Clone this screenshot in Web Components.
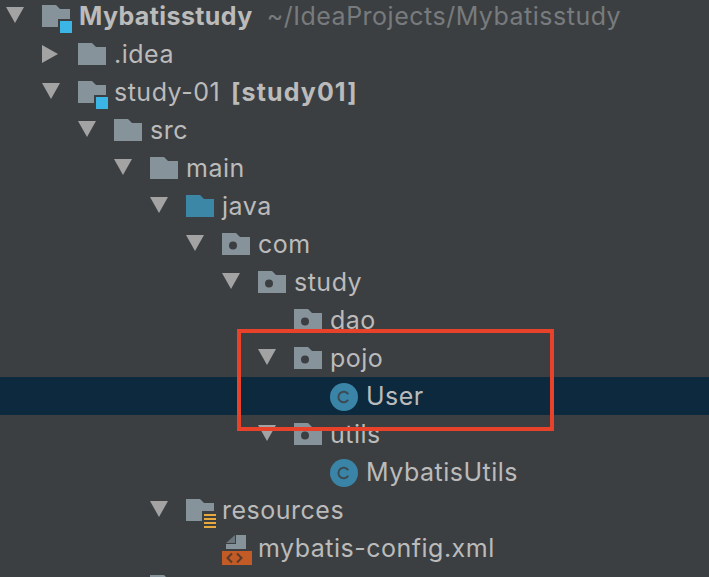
<!doctype html>
<html><head><meta charset="utf-8">
<style>
html,body{margin:0;padding:0;background:#3c3f41}
body{width:709px;height:577px;overflow:hidden;position:relative}
</style></head><body>
<project-tree>
<tree-row depth="0" arrow="down" icon="module"><tree-strong>Mybatisstudy</tree-strong><tree-hint>~/IdeaProjects/Mybatisstudy</tree-hint></tree-row>
<tree-row depth="1" arrow="right" icon="folder">.idea</tree-row>
<tree-row depth="1" arrow="down" icon="module">study-01<tree-tag>[study01]</tree-tag></tree-row>
<tree-row depth="2" arrow="down" icon="folder">src</tree-row>
<tree-row depth="3" arrow="down" icon="folder">main</tree-row>
<tree-row depth="4" arrow="down" icon="source">java</tree-row>
<tree-row depth="5" arrow="down" icon="package">com</tree-row>
<tree-row depth="6" arrow="down" icon="package">study</tree-row>
<tree-row depth="7" icon="package">dao</tree-row>
<tree-row depth="7" arrow="down" icon="package">pojo</tree-row>
<tree-row depth="8" icon="class" selected>User</tree-row>
<tree-row depth="7" arrow="down" icon="package">utils</tree-row>
<tree-row depth="8" icon="class">MybatisUtils</tree-row>
<tree-row depth="4" arrow="down" icon="resources">resources</tree-row>
<tree-row depth="5" icon="xml">mybatis-config.xml</tree-row>
<tree-row depth="3" icon="folder"></tree-row>
</project-tree>
<red-box></red-box>
<script>
const F='M0 0H14L18 4H28V22H0Z';
const folder=(c='#87939a',extra='')=>`<path d="${F}" fill="${c}"/>${extra}`;
const ICONS={
 folder:folder(),
 source:folder('#3d87a6'),
 module:folder('#87939a','<rect x="16" y="14" width="16" height="16" fill="#3c3f41"/><rect x="18" y="16" width="12" height="12" fill="#3bb4e6"/>'),
 package:folder('#87939a','<circle cx="11" cy="12.500" r="4" fill="#3c3f41"/>'),
 resources:folder('#87939a','<rect x="16" y="12" width="16" height="18" fill="#3c3f41"/><path d="M18 15h12v2H18zM18 19h12v2H18zM18 23h12v2H18zM18 27h12v2H18z" fill="#e5a93c"/>'),
 class:'<circle cx="14" cy="12" r="14" fill="#3a84a8"/><path d="M18.200 9.200A5.300 5.300 0 1 0 18.200 14.800" fill="none" stroke="#3c4a52" stroke-width="2"/>',
 xml:'<path d="M4 6L13 -2V6Z" fill="#6b767c"/><path d="M14 -2H24V12H4V7H14Z" fill="#87939a"/><rect x="0" y="14" width="30" height="14" fill="#c25b26"/><path d="M10 16.500L5.500 21L10 25.500M15 16.500L19.500 21L15 25.500" fill="none" stroke="#5a3a28" stroke-width="2"/>'
};
const ARROWS={down:'<path d="M0 0H18L9 16Z" fill="#a3a3a3"/>',right:'<path d="M0 0L16 9L0 18Z" fill="#a3a3a3"/>'};

class ProjectTree extends HTMLElement{constructor(){super();this.attachShadow({mode:'open'}).innerHTML=`<style>
:host{display:flex;flex-direction:column;margin-top:-3px;font:25px/38px Inter,"Liberation Sans",sans-serif;letter-spacing:.5px;color:#bbb}
</style><slot></slot>`}}
class TreeRow extends HTMLElement{constructor(){super();this.attachShadow({mode:'open'})}
 connectedCallback(){
  const d=+this.getAttribute('depth')||0,a=this.getAttribute('arrow'),i=this.getAttribute('icon');
  this.shadowRoot.innerHTML=`<style>
:host{display:flex;align-items:center;height:38px;flex:none;white-space:pre;padding-left:${d*36+6}px}
:host([selected]){background:#0d293e}
.a{width:18px;height:18px;margin-right:18px;flex:none;display:block;overflow:visible}
.i{width:28px;height:22px;margin-right:8px;flex:none;display:block;overflow:visible}
</style><svg class="a" viewBox="0 0 18 18">${a?ARROWS[a]:''}</svg><svg class="i" viewBox="0 0 28 22">${ICONS[i]||''}</svg><slot></slot>`;
 }}
class TreeStrong extends HTMLElement{constructor(){super();this.attachShadow({mode:'open'}).innerHTML=`<style>:host{display:inline;font-weight:700;letter-spacing:.4px;margin-left:1px}</style><slot></slot>`}}
class TreeTag extends HTMLElement{constructor(){super();this.attachShadow({mode:'open'}).innerHTML=`<style>:host{display:inline;font-weight:700;letter-spacing:1.1px;margin-left:11px}</style><slot></slot>`}}
class TreeHint extends HTMLElement{constructor(){super();this.attachShadow({mode:'open'}).innerHTML=`<style>:host{display:inline;color:#787b7d;margin-left:14px}</style><slot></slot>`}}
class RedBox extends HTMLElement{constructor(){super();this.attachShadow({mode:'open'}).innerHTML=`<style>:host{display:block;position:absolute;left:237px;top:329px;width:309px;height:94px;border:4px solid #e8432a}</style>`}}
customElements.define('project-tree',ProjectTree);
customElements.define('tree-row',TreeRow);
customElements.define('tree-strong',TreeStrong);
customElements.define('tree-tag',TreeTag);
customElements.define('tree-hint',TreeHint);
customElements.define('red-box',RedBox);
</script>
</body></html>
